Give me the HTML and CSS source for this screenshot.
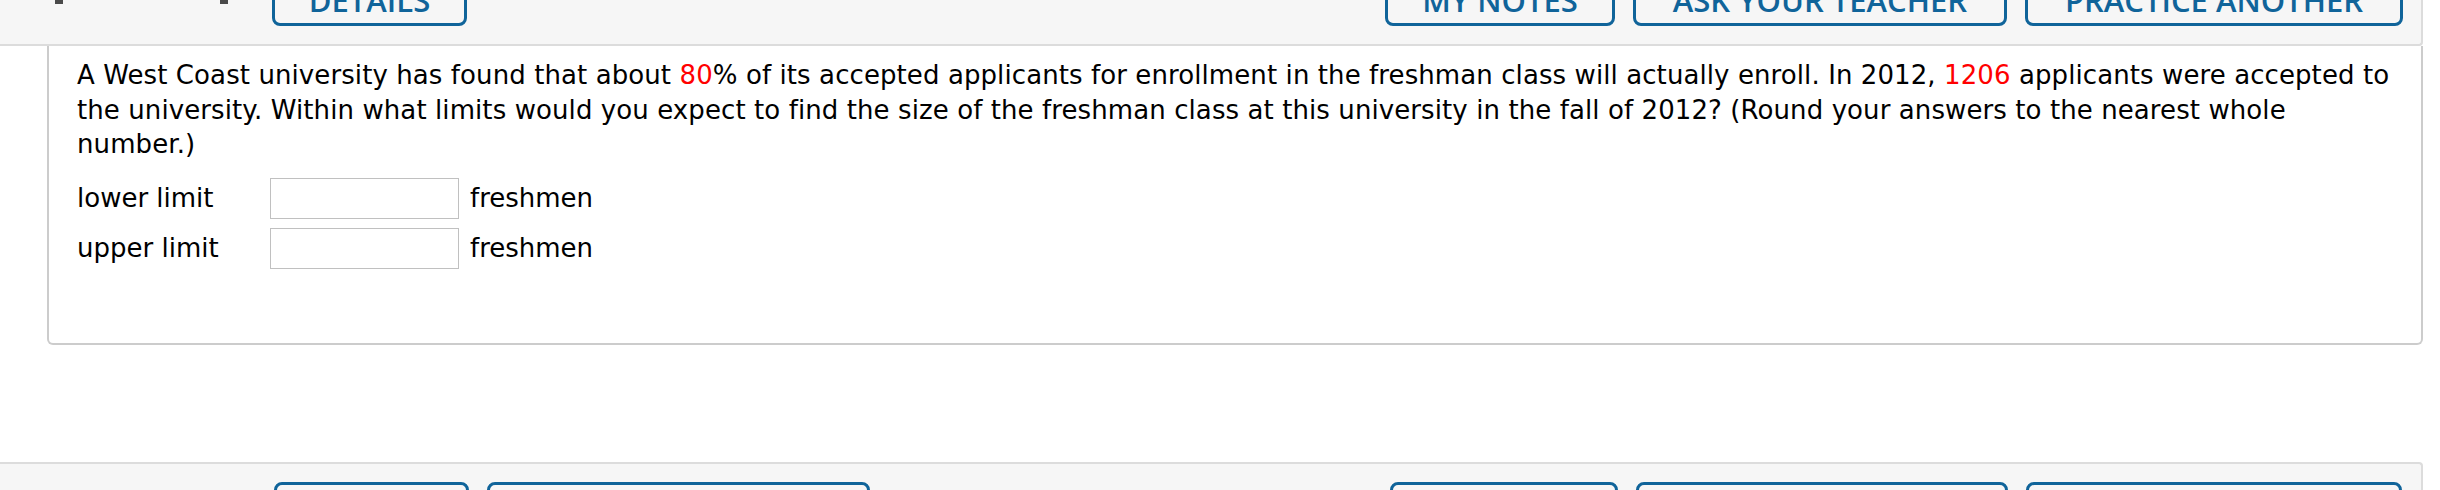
FILE: index.html
```html
<!DOCTYPE html>
<html lang="en">
<head>
<meta charset="utf-8">
<title>Question</title>
<link rel="stylesheet" href="styles.css">
</head>
<body>
<div class="page">
  <div class="toolbar toolbar-top">
    <div class="points">
      <span class="frag frag-l"></span>
      <span class="frag frag-r"></span>
    </div>
    <div class="group">
      <a class="btn w-details">DETAILS</a>
    </div>
    <div class="group group-right">
      <a class="btn w-notes">MY NOTES</a>
      <a class="btn w-ask">ASK YOUR TEACHER</a>
      <a class="btn w-practice">PRACTICE ANOTHER</a>
    </div>
  </div>

  <div class="card">
    <p class="question">A West Coast university has found that about <span class="red">80</span>% of its accepted applicants for enrollment in the freshman class will actually enroll. In 2012, <span class="red">1206</span> applicants were accepted to the university. Within what limits would you expect to find the size of the freshman class at this university in the fall of 2012? (Round your answers to the nearest whole number.)</p>
    <div class="answers">
      <span class="label">lower limit</span>
      <input class="field" type="text">
      <span class="unit">freshmen</span>
      <span class="label">upper limit</span>
      <input class="field" type="text">
      <span class="unit">freshmen</span>
    </div>
  </div>

  <div class="toolbar toolbar-bottom">
    <div class="group group-left2">
      <a class="btn btn-down w-details2">DETAILS</a>
      <a class="btn btn-down w-submit">SUBMIT ANSWER</a>
    </div>
    <div class="group group-right">
      <a class="btn btn-down w-notes2">MY NOTES</a>
      <a class="btn btn-down w-ask2">ASK YOUR TEACHER</a>
      <a class="btn btn-down w-practice2">PRACTICE ANOTHER</a>
    </div>
  </div>
</div>
</body>
</html>
```

FILE: styles.css
```css
html, body {
  margin: 0;
  padding: 0;
  background: #ffffff;
}

body {
  font-family: "DejaVu Sans", Verdana, sans-serif;
  color: #000;
  overflow: hidden;
}

.page {
  width: 2423px;
  display: flex;
  flex-direction: column;
}

.toolbar {
  background: #f6f6f6;
  display: flex;
  box-sizing: border-box;
  overflow: hidden;
}

.toolbar-top {
  height: 46px;
  align-items: flex-end;
  padding-bottom: 18px;
  border-bottom: 2px solid #dcdcdc;
  border-right: 2px solid #dcdcdc;
  border-bottom-right-radius: 4px;
}

.toolbar-bottom {
  margin-top: 117px;
  height: 90px;
  align-items: flex-start;
  padding-top: 18px;
  padding-left: 274px;
  border-top: 2px solid #dcdcdc;
  border-right: 2px solid #dcdcdc;
  border-top-right-radius: 4px;
}

.points {
  align-self: flex-start;
  display: flex;
  width: 272px;
  padding-left: 55px;
  box-sizing: border-box;
}

.frag {
  display: block;
  width: 8px;
  height: 4px;
  background: #4a4a4a;
}

.frag-r {
  margin-left: 157px;
}

.group {
  display: flex;
  gap: 18px;
}

.group-right {
  margin-left: auto;
  padding-right: 18px;
}

.toolbar-bottom .group-right {
  padding-right: 19px;
}

.btn {
  box-sizing: border-box;
  height: 64px;
  display: flex;
  align-items: flex-end;
  justify-content: center;
  padding-bottom: 8px;
  border: 3px solid #10649a;
  border-radius: 8px;
  background: #f6f6f6;
  color: #10649a;
  font-family: "Open Sans", "DejaVu Sans", sans-serif;
  font-weight: 600;
  font-size: 31px;
  line-height: 30px;
  white-space: nowrap;
  text-decoration: none;
}

.btn-down {
  align-items: flex-start;
  padding-top: 14px;
}

.w-details { width: 195px; }
.w-notes { width: 230px; }
.w-ask { width: 374px; }
.w-practice { width: 378px; }

.w-details2 { width: 195px; }
.w-submit { width: 383px; }
.w-notes2 { width: 228px; }
.w-ask2 { width: 372px; }
.w-practice2 { width: 376px; }

.card {
  margin-left: 47px;
  border: 2px solid #cccccc;
  border-top: none;
  border-bottom-left-radius: 6px;
  border-bottom-right-radius: 6px;
  padding: 12px 24px 74px 28px;
  background: #fff;
}

.question {
  margin: 0;
  font-size: 26px;
  line-height: 34.5px;
  letter-spacing: 0.09px;
}

.red {
  color: #ff0000;
}

.answers {
  margin-top: 16px;
  display: grid;
  grid-template-columns: 193px 189px auto;
  row-gap: 9px;
  align-items: center;
  font-size: 26px;
  line-height: 34.5px;
}

.field {
  box-sizing: border-box;
  width: 189px;
  height: 41px;
  margin: 0;
  padding: 0 6px;
  border: 1px solid #c0c0c0;
  border-radius: 0;
  background: #fff;
  font-family: "DejaVu Sans", Verdana, sans-serif;
  font-size: 24px;
}

.unit {
  margin-left: 11px;
}
```
